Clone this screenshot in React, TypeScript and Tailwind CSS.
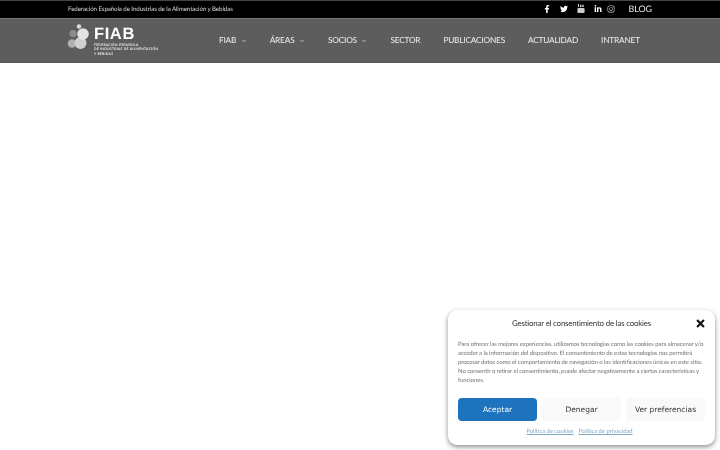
import { FaFacebookF, FaTwitter, FaLinkedinIn, FaInstagram } from "react-icons/fa";
import { ChevronDown } from "lucide-react";

const nav: [string, boolean][] = [
  ["FIAB", true],
  ["ÁREAS", true],
  ["SOCIOS", true],
  ["SECTOR", false],
  ["PUBLICACIONES", false],
  ["ACTUALIDAD", false],
  ["INTRANET", false],
];

export default function App() {
  return (
    <div className="relative w-[720px] h-[450px] overflow-hidden bg-white font-['Lato','Liberation_Sans',sans-serif] [text-rendering:geometricPrecision] blur-[0.3px]">
      <div className="h-[18px] bg-black border-t border-[#444] flex items-center pl-[68px] pr-[68px] text-[#d8d8d8]">
        <span className="text-[6.2px] tracking-[-0.1px] whitespace-nowrap">Federación Española de Industrias de la Alimentación y Bebidas</span>
        <div className="ml-auto flex items-center text-white pb-[2px]">
          <FaFacebookF className="w-[8px] h-[8px] mr-[9px]" />
          <FaTwitter className="w-[8px] h-[8px] mr-[9px]" />
          <svg width="8" height="9" viewBox="0 0 8 10" fill="currentColor" className="mr-[9px] opacity-80">
            <rect x="0.6" y="0" width="1.2" height="3.4" />
            <rect x="2.9" y="0.9" width="1.6" height="2.5" />
            <rect x="5.4" y="0.9" width="1.6" height="2.5" />
            <rect x="0" y="4.4" width="8" height="5.6" rx="1.2" />
          </svg>
          <FaLinkedinIn className="w-[8px] h-[8px] mr-[5px]" />
          <FaInstagram className="w-[8px] h-[8px] mr-[13px] opacity-80" />
          <span className="text-[8.9px] leading-none text-[#e8e8e8] pt-[1px]">BLOG</span>
        </div>
      </div>
      <div className="h-[45px] bg-[#5d5d5d] border-t border-[#777] flex items-center pl-[67px]">
        <div className="flex items-start w-[152px]">
          <svg width="24" height="26" viewBox="0 0 24 26" className="shrink-0 mt-[-2px]">
            <circle cx="5" cy="19.5" r="4.3" fill="#b0b0b0" />
            <circle cx="6" cy="9.5" r="3.6" fill="#8c8c8c" />
            <circle cx="12" cy="2.5" r="2.2" fill="#dddddd" />
            <circle cx="13.5" cy="19" r="6" fill="#cfcfcf" />
            <circle cx="16" cy="10" r="5.8" fill="#e4e4e4" />
          </svg>
          <div className="ml-[3px] text-white leading-none">
            <div className="text-[16.5px] font-bold tracking-[0.6px] leading-[14px] mt-[1px] font-['Liberation_Sans',sans-serif]">FIAB</div>
            <div className="text-[3.4px] font-bold tracking-[0.25px] leading-[4.6px] mt-[2px] text-[#e8e8e8] whitespace-nowrap">FEDERACIÓN ESPAÑOLA<br />DE INDUSTRIAS DE ALIMENTACIÓN<br />Y BEBIDAS</div>
          </div>
        </div>
        <nav className="flex items-center gap-[23px] text-[#eeeeee] text-[8.3px] tracking-[-0.2px] pb-[1px]">
          {nav.map(([label, chev]) => (
            <div key={label} className="flex items-center whitespace-nowrap">
              <span>{label}</span>
              {chev && <ChevronDown className="w-[6px] h-[6px] ml-[4.5px]" strokeWidth={2.5} />}
            </div>
          ))}
        </nav>
      </div>
      <div className="absolute left-[448px] top-[310px] w-[267px] h-[135px] bg-white rounded-[9px] shadow-[0_2px_5px_rgba(0,0,0,0.45)] px-[10px]">
        <div className="relative h-[27px] flex items-center justify-center">
          <span className="text-[7.9px] tracking-[-0.19px] text-[#333]">Gestionar el consentimiento de las cookies</span>
          <svg viewBox="0 0 10 10" className="absolute right-[0px] top-[9px] w-[9px] h-[9px]">
            <path d="M1.2 1.2 L8.8 8.8 M8.8 1.2 L1.2 8.8" stroke="#111" strokeWidth="2.4" />
          </svg>
        </div>
        <p className="mt-[3px] text-[6px] tracking-[-0.1px] leading-[9px] text-[#757575] whitespace-nowrap">
          Para ofrecer las mejores experiencias, utilizamos tecnologías como las cookies para almacenar y/o<br />
          acceder a la información del dispositivo. El consentimiento de estas tecnologías nos permitirá<br />
          procesar datos como el comportamiento de navegación o las identificaciones únicas en este sitio.<br />
          No consentir o retirar el consentimiento, puede afectar negativamente a ciertas características y<br />
          funciones.
        </p>
        <div className="mt-[13px] flex gap-[5px] text-[7.5px] font-['DejaVu_Sans',sans-serif]">
          <div className="w-[79px] h-[23px] rounded-[4px] bg-[#1e73be] text-white flex items-center justify-center">Aceptar</div>
          <div className="w-[79px] h-[23px] rounded-[4px] bg-[#f9f9f9] text-[#333] flex items-center justify-center">Denegar</div>
          <div className="w-[79px] h-[23px] rounded-[4px] bg-[#f9f9f9] text-[#333] flex items-center justify-center">Ver preferencias</div>
        </div>
        <div className="mt-[7px] pr-[4px] flex justify-center gap-[5px] text-[5.8px] text-[#7fa8c4] underline">
          <span>Política de cookies</span>
          <span>Política de privacidad</span>
        </div>
      </div>
    </div>
  );
}
